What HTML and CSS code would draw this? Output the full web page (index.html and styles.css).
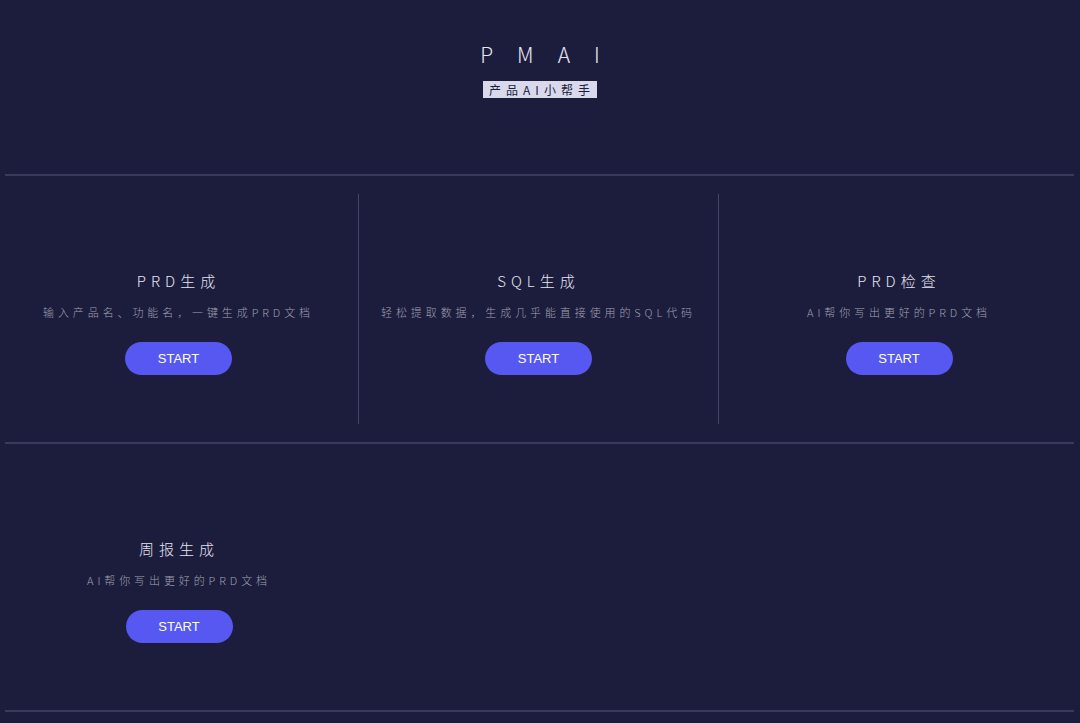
FILE: index.html
```html
<!DOCTYPE html>
<html lang="zh-CN">
<head>
    <meta charset="UTF-8">
    <meta name="viewport" content="width=device-width, initial-scale=1.0">
    <title>PMAI - 产品AI小帮手</title>
    <link rel="stylesheet" href="styles.css">
</head>
<body>

    <header class="header">
        <h1 class="logo">PMAI</h1>
        <span class="slogan">产品AI小帮手</span>
    </header>

    <div class="divider"></div>

    <section class="row">
        <div class="card">
            <h2>PRD生成</h2>
            <p>输入产品名、功能名，一键生成PRD文档</p>
            <button>START</button>
        </div>
        <div class="card">
            <h2>SQL生成</h2>
            <p>轻松提取数据，生成几乎能直接使用的SQL代码</p>
            <button>START</button>
        </div>
        <div class="card">
            <h2>PRD检查</h2>
            <p>AI帮你写出更好的PRD文档</p>
            <button>START</button>
        </div>
    </section>

    <div class="divider"></div>

    <section class="row">
        <div class="card">
            <h2>周报生成</h2>
            <p>AI帮你写出更好的PRD文档</p>
            <button>START</button>
        </div>
    </section>

    <div class="divider"></div>

</body>
</html>
```

FILE: styles.css
```css
body {
    margin: 0;
    background-color: #1c1c3d;
    color: #e2e2f0;
    font-family: "Noto Sans CJK SC", "Noto Sans", sans-serif;
}
.header {
    height: 174px;
    display: flex;
    flex-direction: column;
    align-items: center;
}
.logo {
    margin: 39px 0 0;
    padding-left: 24px;
    font-size: 21px;
    line-height: 30px;
    font-weight: 200;
    letter-spacing: 24px;
    color: #e6e6f2;
}
.slogan {
    margin-top: 12px;
    padding: 0 2px 0 6px;
    background-color: #d9d9eb;
    color: #1c1c3d;
    font-size: 12px;
    line-height: 17px;
    letter-spacing: 5px;
}
.divider {
    height: 2px;
    margin: 0 6px 0 5px;
    background-color: #3a3a5d;
}
.row {
    display: grid;
    grid-template-columns: repeat(3, 360px);
    height: 266px;
    margin-left: -1px;
}
.card {
    margin: 18px 0;
    padding-top: 77px;
    display: flex;
    flex-direction: column;
    align-items: center;
}
.row .card:not(:last-child) {
    border-right: 1px solid #45456a;
}
.card h2 {
    margin: 0;
    font-size: 15px;
    line-height: 20px;
    font-weight: 300;
    letter-spacing: 5px;
    color: #e4e4f0;
}
.card p {
    margin: 13px 0 0;
    font-size: 11px;
    line-height: 16px;
    font-weight: 300;
    letter-spacing: 3.9px;
    color: #a0a0b2;
}
.card button {
    margin-top: 22px;
    width: 107px;
    height: 33px;
    border: none;
    border-radius: 17px;
    background-color: #5658f1;
    color: #fff;
    font-family: "Liberation Sans", Arial, sans-serif;
    font-size: 13px;
    cursor: pointer;
}
```
